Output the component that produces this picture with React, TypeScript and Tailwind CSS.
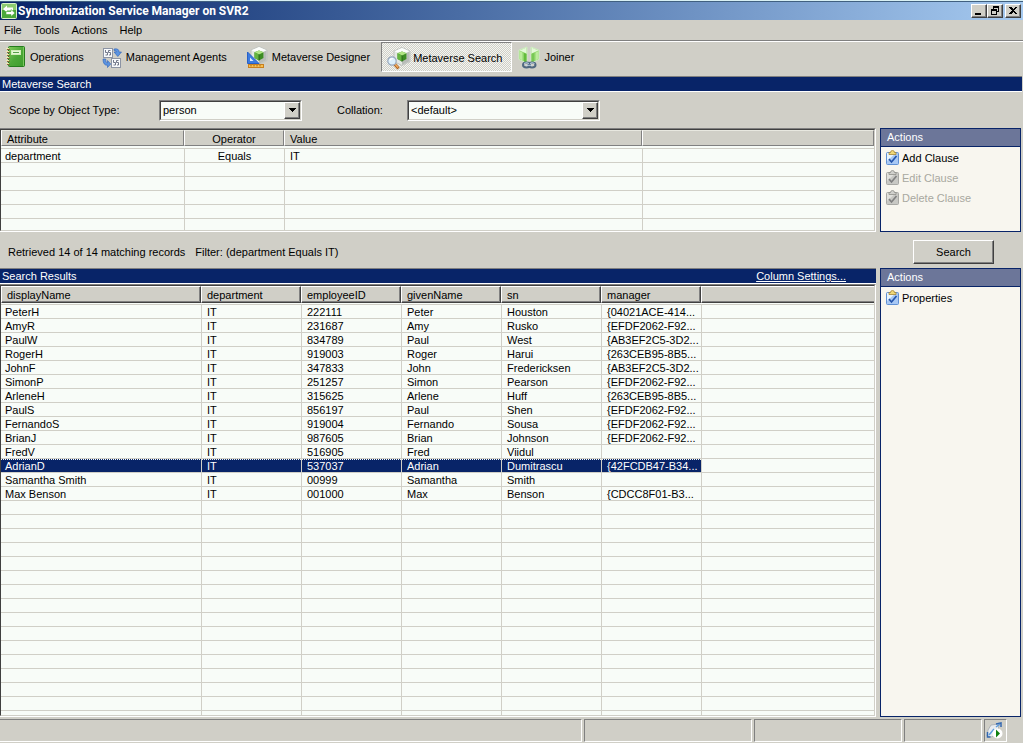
import React, { useState } from "react";
import clsx from "clsx";

const MENUS = ["File", "Tools", "Actions", "Help"];

const CLAUSE_ROWS = 6;
const RESULT_ROWS = 80;

const RECORDS = [
  ["PeterH", "IT", "222111", "Peter", "Houston", "{04021ACE-414..."],
  ["AmyR", "IT", "231687", "Amy", "Rusko", "{EFDF2062-F92..."],
  ["PaulW", "IT", "834789", "Paul", "West", "{AB3EF2C5-3D2..."],
  ["RogerH", "IT", "919003", "Roger", "Harui", "{263CEB95-8B5..."],
  ["JohnF", "IT", "347833", "John", "Fredericksen", "{AB3EF2C5-3D2..."],
  ["SimonP", "IT", "251257", "Simon", "Pearson", "{EFDF2062-F92..."],
  ["ArleneH", "IT", "315625", "Arlene", "Huff", "{263CEB95-8B5..."],
  ["PaulS", "IT", "856197", "Paul", "Shen", "{EFDF2062-F92..."],
  ["FernandoS", "IT", "919004", "Fernando", "Sousa", "{EFDF2062-F92..."],
  ["BrianJ", "IT", "987605", "Brian", "Johnson", "{EFDF2062-F92..."],
  ["FredV", "IT", "516905", "Fred", "Viidul", ""],
  ["AdrianD", "IT", "537037", "Adrian", "Dumitrascu", "{42FCDB47-B34..."],
  ["Samantha Smith", "IT", "00999", "Samantha", "Smith", ""],
  ["Max Benson", "IT", "001000", "Max", "Benson", "{CDCC8F01-B3..."],
];

const COLUMNS = [
  { label: "displayName", width: "w-[200px]" },
  { label: "department", width: "w-[100px]" },
  { label: "employeeID", width: "w-[100px]" },
  { label: "givenName", width: "w-[100px]" },
  { label: "sn", width: "w-[100px]" },
  { label: "manager", width: "w-[100px]" },
  { label: "", width: "" },
];

/* ---------- icons ---------- */

function AppIcon() {
  return (
    <svg width="16" height="16" viewBox="0 0 16 16" className="shrink-0">
      <rect x="0.5" y="0.5" width="15" height="15" rx="1" fill="#4aa83a" stroke="#d8f0c8" />
      <rect x="1" y="1" width="14" height="6" fill="#8ccc70" />
      <path d="M2 6 L6 2.5 V4.5 H12 V7.5 H6 V9.5 Z" fill="#fff" />
      <path d="M14 10 L10 6.5 V8.5 H5 V11.5 H10 V13.5 Z" fill="#fff" stroke="#4aa83a" strokeWidth="0.6" />
    </svg>
  );
}

function BookIcon() {
  return (
    <svg width="20" height="22" viewBox="0 0 20 22">
      <defs>
        <linearGradient id="cover" x1="0" y1="0" x2="1" y2="1">
          <stop offset="0" stopColor="#84cc5c" />
          <stop offset="0.5" stopColor="#4ca838" />
          <stop offset="1" stopColor="#3c9c2c" />
        </linearGradient>
      </defs>
      <rect x="2.500" y="0.500" width="16" height="20" rx="1" fill="url(#cover)" stroke="#247c1c" />
      <path d="M17.500 1 V20" stroke="#7cc860" />
      <rect x="5.500" y="4.500" width="9" height="4" fill="#e4f8d4" stroke="#d0ecb8" />
      <rect x="7" y="6" width="6" height="1" fill="#58a04a" />
      {[2, 5, 8, 11, 14, 17].map((y) => (
        <g key={y}>
          <rect x="0" y={y} width="3" height="1" fill="#f0e4b0" />
          <rect x="1" y={y + 1} width="3" height="1" fill="#807038" />
        </g>
      ))}
    </svg>
  );
}

function AgentsIcon() {
  return (
    <svg width="20" height="21" viewBox="0 0 20 21">
      <rect x="1.500" y="1.500" width="9" height="9" fill="#f8fafc" stroke="#8c94a4" />
      <path d="M3.500 3 V5.500 H5.500 V8 H3.500 M8.500 3.500 H6.500 V5.500 H8.500 V8 H7" fill="none" stroke="#50586c" strokeWidth="0.8" />
      <rect x="9.500" y="11.500" width="9" height="9" fill="#f8fafc" stroke="#8c94a4" />
      <path d="M11.500 13 V15.500 H13.500 V18 H11.500 M16.500 13.500 H14.500 V15.500 H16.500 V18 H15" fill="none" stroke="#50586c" strokeWidth="0.8" />
      <path d="M12 2 Q17 1 17 5 H19.500 L15.800 9.500 L12 5 H14.300 Q14.500 3.500 12 3.500 Z" fill="#5c94e0" stroke="#2c60b8" strokeWidth="0.6" />
      <path d="M1 12 H3.700 Q3.500 16 5.500 16 V13.500 L8.700 17 L5.500 20.500 V18.300 Q1 18.500 1 12 Z" fill="#5c94e0" stroke="#2c60b8" strokeWidth="0.6" />
    </svg>
  );
}

// Translucent hexagon with the small green cube, shared by two tools
function MetaverseCube() {
  return (
    <g>
      <path d="M9 0.500 L17 4 V14.500 L9 18.500 L1 14.500 V4 Z" fill="#e4e8e4" stroke="#c0c4c0" />
      <path d="M9 1 L16.500 4.300 L9 7 L1.500 4.300 Z" fill="#fcfefc" />
      <path d="M16.500 4.500 V14.200 L9 18 V14 L13.500 11.500 V6 Z" fill="#b8bcb8" />
      <path d="M9 4.500 L13.500 6.300 V12 L9 14.500 L4.500 12 V6.300 Z" fill="#3c8c24" />
      <path d="M9 4.500 L13.500 6.300 L9 8.500 L4.500 6.300 Z" fill="#b0e484" />
      <path d="M4.500 6.300 L9 8.500 V14.500 L4.500 12 Z" fill="#64b440" />
      <path d="M9 8.500 V14.500" stroke="#245c18" strokeWidth="0.8" />
    </g>
  );
}

function DesignerIcon() {
  return (
    <svg width="21" height="22" viewBox="0 0 21 22">
      <g transform="translate(3 0)">
        <MetaverseCube />
      </g>
      <path d="M0.500 6 V17.500 H12 Z" fill="#3c7ce0" stroke="#2860c8" />
      <path d="M3 11.500 V15 H6.500 Z" fill="#e0ecfc" />
      <rect x="1.500" y="18.500" width="15" height="3" fill="#f8c050" stroke="#c88020" />
      <path d="M4 19 V20.500 M7 19 V20.500 M10 19 V20.500 M13 19 V20.500" stroke="#a46818" />
    </svg>
  );
}

function MetaverseSearchIcon() {
  return (
    <svg width="24" height="23" viewBox="0 0 24 23">
      <g transform="translate(6 0)">
        <MetaverseCube />
      </g>
      <path d="M7.500 17 L11.500 21.500" stroke="#b06820" strokeWidth="3" />
      <path d="M7.500 16.500 L11 20.500" stroke="#f0a860" strokeWidth="1.400" />
      <circle cx="5" cy="14" r="4.200" fill="#dcf0fc" stroke="#98a8bc" strokeWidth="1.200" />
      <path d="M2.800 13.500 Q3.500 11.300 5.800 11.600" fill="none" stroke="#fff" strokeWidth="1.200" />
    </svg>
  );
}

function JoinerIcon() {
  return (
    <svg width="22" height="23" viewBox="0 0 22 23">
      <path d="M9 1 V17 L1 13.500 V4 Z" fill="#8cd468" stroke="#d0ecc4" />
      <path d="M8.500 1.500 V7.500 L1.500 4.500 Z" fill="#e4f8d8" />
      <path d="M1.500 5 L4.500 6.500 V14.500 L1.500 13 Z" fill="#bcec9c" />
      <path d="M8.500 8 V16.500 L6 15.500 V7 Z" fill="#64bc3c" />
      <path d="M13 1 V17 L21 13.500 V4 Z" fill="#8cd468" stroke="#d0ecc4" />
      <path d="M13.500 1.500 V7.500 L20.500 4.500 Z" fill="#e4f8d8" />
      <path d="M20.500 5 L17.500 6.500 V14.500 L20.500 13 Z" fill="#bcec9c" />
      <path d="M13.500 8 V16.500 L16 15.500 V7 Z" fill="#78c854" />
      <ellipse cx="8.500" cy="19" rx="3.500" ry="2.400" fill="none" stroke="#506880" strokeWidth="2" />
      <ellipse cx="14" cy="19" rx="3.500" ry="2.400" fill="none" stroke="#506880" strokeWidth="2" />
      <path d="M6 17.500 Q8.500 15.800 11 17.500 M12 17.500 Q14 15.800 16.500 17.500 M8 19.300 H14" fill="none" stroke="#c4d8ec" strokeWidth="0.9" />
    </svg>
  );
}

function ClipboardIcon({ disabled = false }: { disabled?: boolean }) {
  return (
    <svg width="13" height="15" viewBox="0 0 13 15" className="shrink-0">
      <rect x="0.500" y="2.500" width="12" height="12" rx="1" fill={disabled ? "#c8c8c4" : "#a8c8f4"} stroke={disabled ? "#a8a8a4" : "#6090d4"} />
      <path d="M1 3 H10 L1 11 Z" fill={disabled ? "#e0e0dc" : "#e8f4fc"} />
      <path d="M3 4.500 V2.500 H4.500 Q4.500 0.500 6.500 0.500 Q8.500 0.500 8.500 2.500 H10 V4.500 Z" fill={disabled ? "#d0d0cc" : "#f0d878"} stroke={disabled ? "#90908c" : "#a88838"} strokeWidth="0.8" />
      <path d="M3 9 L5.500 12 L10.500 6" fill="none" stroke={disabled ? "#808080" : "#2454ac"} strokeWidth="1.700" />
    </svg>
  );
}

function StatusIcon() {
  return (
    <svg width="17" height="17" viewBox="0 0 17 17">
      <path d="M2 8 L5 3 L13 2 L12 9 L6 15 L1 14 Z" fill="#e8ecf0" stroke="#b0b4b8" />
      <path d="M1.500 10 V15 H4.500 M10 2 L15 1 V5" fill="none" stroke="#3468b0" strokeWidth="1.500" />
      <path d="M3 13 L8 7 M10 5 L14 2" stroke="#5c9cdc" strokeWidth="1.500" />
      <circle cx="11.500" cy="11.500" r="5" fill="#fff" />
      <path d="M10 7.500 L14 11.500 L10 15.500 Z" fill="#108010" />
    </svg>
  );
}

/* ---------- window pieces ---------- */

function CaptionButton({ label, children }: { label: string; children: React.ReactNode }) {
  return (
    <button
      aria-label={label}
      className="flex h-[14px] w-[16px] items-center justify-center border border-t-white border-l-white border-r-[#404040] border-b-[#404040] bg-[#d0cfc7] shadow-[inset_-1px_-1px_#808080]"
    >
      <svg width="10" height="10" viewBox="0 0 10 10" shapeRendering="crispEdges">
        {children}
      </svg>
    </button>
  );
}

const TOOLS = [
  { label: "Operations", icon: <BookIcon />, className: "gap-1 pl-1.5 pr-3" },
  { label: "Management Agents", icon: <AgentsIcon />, className: "gap-1 pl-1.5 pr-3.5" },
  { label: "Metaverse Designer", icon: <DesignerIcon />, className: "gap-1 pl-1.5 pr-[11px]" },
  { label: "Metaverse Search", icon: <MetaverseSearchIcon />, className: "gap-0.5 pl-[5px] pr-[9px]" },
  { label: "Joiner", icon: <JoinerIcon />, className: "gap-1 pl-1.5 pr-[9px]" },
];

function Toolbar() {
  const active = "Metaverse Search";

  return (
    <div className="flex h-[34px] items-start border-t border-white">
      {TOOLS.map((t) => (
        <button
          key={t.label}
          className={clsx(
            "flex h-[30px] items-center whitespace-nowrap",
            t.className,
            t.label === active &&
              "border border-t-[#808080] border-l-[#808080] border-r-white border-b-white bg-[repeating-conic-gradient(#f4f6f2_0_25%,#d0cfc7_0_50%)] bg-[length:2px_2px] pt-0.5",
          )}
        >
          {t.icon}
          {t.label}
        </button>
      ))}
    </div>
  );
}

interface SelectBoxProps {
  id: string;
  options: string[];
  className: string;
}

function SelectBox({ id, options, className }: SelectBoxProps) {
  return (
    <div className={clsx("relative border border-t-[#808080] border-l-[#808080] border-r-white border-b-white", className)}>
      <select
        id={id}
        className="block h-[19px] w-full appearance-none border border-t-[#404040] border-l-[#404040] border-r-[#d0cfc7] border-b-[#d0cfc7] bg-[#f8fcf8] pl-0.5 outline-none"
      >
        {options.map((o) => (
          <option key={o}>{o}</option>
        ))}
      </select>
      <span className="pointer-events-none absolute top-px right-px flex h-[17px] w-4 items-center justify-center border border-t-white border-l-white border-r-[#404040] border-b-[#404040] bg-[#d0cfc7] shadow-[inset_-1px_-1px_#808080]">
        <svg width="7" height="4" viewBox="0 0 7 4" shapeRendering="crispEdges">
          <path d="M0 0 H7 L3.500 4 Z" />
        </svg>
      </span>
    </div>
  );
}

function SectionBar({ title, children }: { title: string; children?: React.ReactNode }) {
  return (
    <div className="flex h-4 shrink-0 items-center justify-between border-t border-b border-t-[#808080] border-b-white bg-[#082468] pr-[30px] pl-0.5 leading-[14px] text-white">
      <h2>{title}</h2>
      {children}
    </div>
  );
}

interface ActionItem {
  label: string;
  disabled?: boolean;
}

function ActionsPanel({ items, className }: { items: ActionItem[]; className?: string }) {
  return (
    <aside className={clsx("border border-[#082468] bg-[#f8f6ef]", className)}>
      <h2 className="h-[18px] border-b border-[#082468] bg-[#6c7699] pl-1.5 leading-[17px] text-white">Actions</h2>
      <div className="flex flex-col items-start pt-px pl-[5px]">
        {items.map((item) => (
          <button
            key={item.label}
            disabled={item.disabled}
            className="flex h-5 items-start gap-[3px] pt-0.5 leading-[17px] disabled:text-[#a8a8a0]"
          >
            <ClipboardIcon disabled={item.disabled} />
            {item.label}
          </button>
        ))}
      </div>
    </aside>
  );
}

// Sunken two-tone frame around both list views
function ListFrame({ children, className }: { children: React.ReactNode; className?: string }) {
  return (
    <div className={clsx("flex border-t border-r border-b border-t-[#808080] border-r-white border-b-white", className)}>
      <div className="min-w-0 flex-1 overflow-hidden border border-t-[#404040] border-l-[#404040] border-r-[#d0cfc7] border-b-[#d0cfc7] bg-[#f8fcf8]">
        {children}
      </div>
    </div>
  );
}

const cell = "h-[14px] overflow-hidden border-b border-[#d0cfc7] p-0 pt-px leading-[12px] whitespace-nowrap";

function ClauseTable() {
  const head =
    "h-4 border-t border-l border-r border-b border-t-[#e8e8e0] border-l-white border-r-[#808080] border-b-[#808080] bg-[#d0cfc7] px-[5px] leading-4";
  const th = "border-b border-[#d0cfc7] p-0 pb-0.5 font-normal";

  return (
    <table className="w-full table-fixed border-separate border-spacing-0 text-left">
      <thead>
        <tr>
          <th className={clsx(th, "w-[183px]")}><div className={head}>Attribute</div></th>
          <th className={clsx(th, "w-[100px] text-center")}><div className={head}>Operator</div></th>
          <th className={clsx(th, "w-[358px]")}><div className={head}>Value</div></th>
          <th className={th}><div className={head} /></th>
        </tr>
      </thead>
      <tbody>
        {Array.from({ length: CLAUSE_ROWS }, (_, i) => (
          <tr key={i}>
            <td className={clsx(cell, "pl-1")}>{i === 0 && "department"}</td>
            <td className={clsx(cell, "border-l text-center")}>{i === 0 && "Equals"}</td>
            <td className={clsx(cell, "border-l pl-[5px]")}>{i === 0 && "IT"}</td>
            <td className={clsx(cell, "border-l")} />
          </tr>
        ))}
      </tbody>
    </table>
  );
}

function ResultsTable() {
  const [selected, setSelected] = useState(11);

  return (
    <table className="w-full table-fixed border-separate border-spacing-0 text-left">
      <thead>
        <tr>
          {COLUMNS.map((c) => (
            <th key={c.label} className={clsx("border-b border-[#d0cfc7] p-0 pb-px font-normal", c.width)}>
              <div
                className={clsx(
                  "h-[17px] border-t border-b border-l border-t-white border-l-white border-b-[#404040] bg-[#d0cfc7] pl-[5px] leading-4",
                  c.label
                    ? "border-r border-r-[#404040] shadow-[inset_-1px_-1px_#808080]"
                    : "shadow-[inset_0_-1px_#808080]",
                )}
              >
                {c.label}
              </div>
            </th>
          ))}
        </tr>
      </thead>
      <tbody>
        {Array.from({ length: RESULT_ROWS }, (_, row) => (
          <tr key={row} onClick={() => row < RECORDS.length && setSelected(row)}>
            {COLUMNS.map((c, col) => (
              <td
                key={c.label}
                className={clsx(
                  cell,
                  col === 0 ? "pl-1" : "border-l pl-[5px]",
                  row === selected &&
                    col < 6 &&
                    "bg-[#082468] text-white bg-[linear-gradient(90deg,#f8fcf8_50%,transparent_50%)] bg-[length:2px_1px] bg-repeat-x",
                )}
              >
                {RECORDS[row]?.[col]}
              </td>
            ))}
          </tr>
        ))}
      </tbody>
    </table>
  );
}

function StatusBar() {
  const pane = "border border-t-[#808080] border-l-[#808080] border-r-white border-b-white";

  return (
    <footer className="flex h-[26px] shrink-0 gap-0.5 border-b border-white pt-px pr-4 pb-px">
      <div className={clsx(pane, "flex-1 border-l-0")} />
      <div className={clsx(pane, "w-[168px]")} />
      <div className={clsx(pane, "w-[148px]")} />
      <div className={clsx(pane, "w-[78px]")} />
      <div className={clsx(pane, "flex w-[23px] items-center pl-px")}>
        <StatusIcon />
      </div>
    </footer>
  );
}

export default function App() {
  return (
    <div className="flex h-screen flex-col overflow-hidden bg-[#d0cfc7] font-['Liberation_Sans',Arial,sans-serif] text-[11px] leading-[14px] text-black">
      {/* Title bar */}
      <header className="flex h-5 shrink-0 items-center border-t border-[#d8f0f4] bg-linear-to-r from-[#082468] to-[#a6caf0] pr-0.5 pl-px shadow-[inset_0_1px_#406080]">
        <AppIcon />
        <h1 className="flex-1 pl-px font-[Roboto,sans-serif] text-[12px] font-bold text-white">
          Synchronization Service Manager on SVR2
        </h1>
        <div className="flex">
          <CaptionButton label="Minimize">
            <path d="M1 7 H7 V9 H1 Z" />
          </CaptionButton>
          <CaptionButton label="Restore">
            <path d="M3 0 H9 V6 H7 V5 H8 V2 H4 V3 H3 Z M1 3 H7 V9 H1 Z M2 5 V8 H6 V5 Z" fillRule="evenodd" />
          </CaptionButton>
          <span className="w-0.5" />
          <CaptionButton label="Close">
            <path d="M1 1 H3 L5 3 L7 1 H9 L6 4.500 L9 8 H7 L5 6 L3 8 H1 L4 4.500 Z" />
          </CaptionButton>
        </div>
      </header>

      <nav className="flex h-[21px] shrink-0 items-center gap-3 border-b border-[#808080] pl-1">
        {MENUS.map((m) => (
          <button key={m}>{m}</button>
        ))}
      </nav>

      <Toolbar />

      <div className="flex shrink-0 flex-col pr-px pt-px">
        <SectionBar title="Metaverse Search" />
      </div>

      {/* Scope */}
      <div className="flex h-9 shrink-0 items-center pl-[9px]">
        <label htmlFor="scope" className="w-[150px]">Scope by Object Type:</label>
        <SelectBox id="scope" options={["person", "group"]} className="w-[143px]" />
        <label htmlFor="collation" className="ml-[35px] w-[70px]">Collation:</label>
        <SelectBox id="collation" options={["<default>"]} className="w-[193px]" />
      </div>

      {/* Query clauses */}
      <div className="flex h-[104px] shrink-0 gap-1 pr-0.5">
        <ListFrame className="min-w-0 flex-1">
          <ClauseTable />
        </ListFrame>
        <ActionsPanel
          className="w-[141px]"
          items={[
            { label: "Add Clause" },
            { label: "Edit Clause", disabled: true },
            { label: "Delete Clause", disabled: true },
          ]}
        />
      </div>

      <div className="flex h-9 shrink-0 items-center gap-2.5 pr-[29px] pl-2 pt-1">
        <span>Retrieved 14 of 14 matching records</span>
        <span>Filter: (department Equals IT)</span>
        <button className="ml-auto h-6 w-[81px] border border-t-white border-l-white border-r-[#404040] border-b-[#404040] shadow-[inset_-1px_-1px_#808080]">
          Search
        </button>
      </div>

      {/* Results */}
      <div className="flex min-h-0 flex-1 gap-1 pr-0.5 pb-px">
        <section className="flex min-w-0 flex-1 flex-col">
          <SectionBar title="Search Results">
            <a href="#columns" className="underline">Column Settings...</a>
          </SectionBar>
          <ListFrame className="min-h-0 flex-1">
            <ResultsTable />
          </ListFrame>
        </section>
        <ActionsPanel className="w-[141px]" items={[{ label: "Properties" }]} />
      </div>

      <StatusBar />
    </div>
  );
}
